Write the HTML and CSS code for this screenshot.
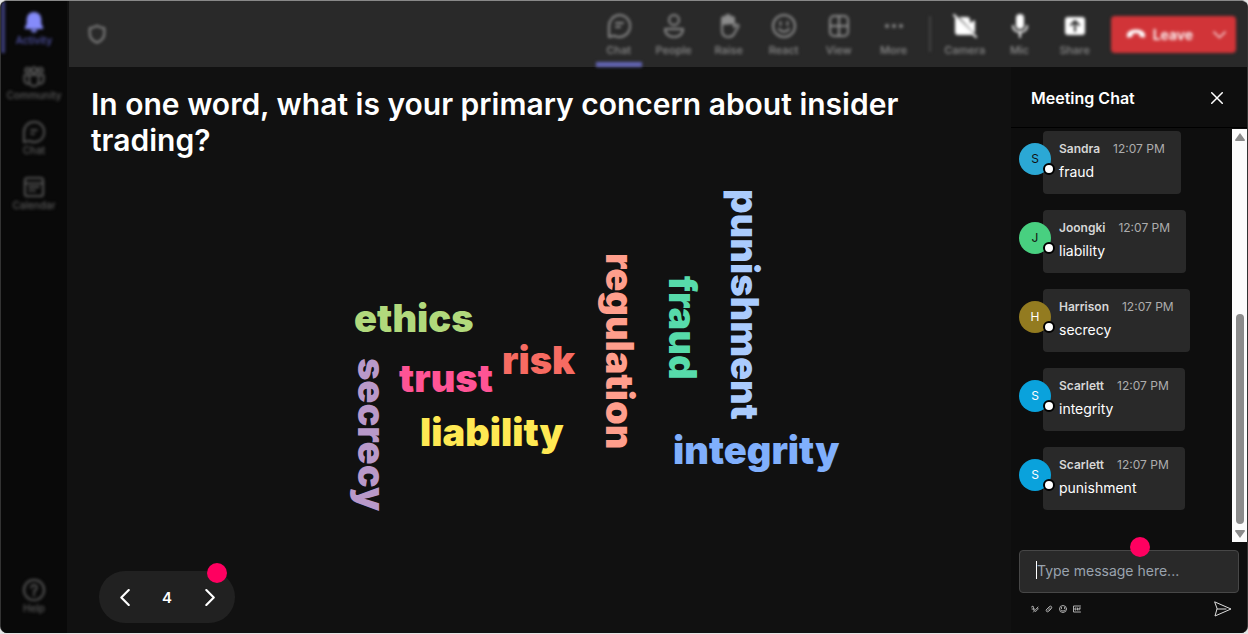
FILE: index.html
```
<!DOCTYPE html>
<html lang="en">
<head>
    <meta charset="UTF-8">
    <meta name="viewport" content="width=device-width, initial-scale=1.0">
    <title>Meeting</title>
    <link rel="stylesheet" href="styles.css">
</head>
<body>
    <div class="app">
        <nav class="sidebar">
            <a href="#" class="nav-item active">
                <svg class="icon" viewBox="0 0 24 24"><path class="solid" d="M12 1a8 8 0 0 0-8 8v5l-2 4c-.3.8 0 1.500 1 1.500h18c1 0 1.300-.7 1-1.500l-2-4V9a8 8 0 0 0-8-8zM8.500 20.500a3.500 3 0 0 0 7 0z"/></svg>
                <span>Activity</span>
            </a>
            <a href="#" class="nav-item">
                <svg class="icon" viewBox="0 0 24 24"><circle cx="5" cy="4.500" r="2.500"/><circle cx="12" cy="4.500" r="3"/><circle cx="19" cy="4.500" r="2.500"/><path d="M7 10h10v7a5 5 0 0 1-10 0zM7 10H1.500v5a4 4 0 0 0 5.500 4M17 10h5.500v5a4 4 0 0 1-5.500 4"/></svg>
                <span>Community</span>
            </a>
            <a href="#" class="nav-item">
                <svg class="icon" viewBox="0 0 24 24"><path d="M12 1a11 11 0 1 1-5 20.700L1 23V12A11 11 0 0 1 12 1zM9 10h6M9 14h3"/></svg>
                <span>Chat</span>
            </a>
            <a href="#" class="nav-item">
                <svg class="icon" viewBox="0 0 24 24"><rect x="2" y="2" width="20" height="20" rx="3"/><path d="M3 8h18M7 12h2M11 12h2M15 12h2M7 16h2M11 16h2"/></svg>
                <span>Calendar</span>
            </a>
            <a href="#" class="nav-item help">
                <svg class="icon" viewBox="0 0 24 24"><circle cx="12" cy="12" r="11"/><path d="M9 9.500a3 3 0 1 1 4.500 2.600c-1 .6-1.500 1-1.500 2.400M12 16.500v1.500"/></svg>
                <span>Help</span>
            </a>
        </nav>

        <div class="workspace">
            <header class="topbar">
                <div class="topbar-inner">
                    <svg class="shield" viewBox="0 0 24 24"><path d="M12 3c3 2 5 2.500 8 2.500v6c0 5-3 8-8 10-5-2-8-5-8-10v-6c3 0 5-.5 8-2.500z"/></svg>
                    <div class="tools">
                        <button class="tool selected">
                            <svg class="icon" viewBox="0 0 24 24"><path d="M12 1a11 11 0 1 1-5 20.700L2 23V12A11 11 0 0 1 12 1zM9 9h7M9 13h4"/></svg>
                            <span>Chat</span>
                        </button>
                        <button class="tool">
                            <svg class="icon" viewBox="0 0 24 24"><circle cx="12" cy="6" r="5"/><path d="M3 15h18c0 5-4 8-9 8s-9-3-9-8z"/></svg>
                            <span>People</span>
                        </button>
                        <button class="tool">
                            <svg class="icon" viewBox="0 0 24 24"><path class="solid" d="M5 11V5a2 2 0 0 1 4 0V3a2 2 0 0 1 4 0v2a2 2 0 0 1 4 0v5z"/><path d="M5 11V5a2 2 0 0 1 4 0V3a2 2 0 0 1 4 0v2a2 2 0 0 1 4 0v8l2-2c1.500-1 3 0 2.500 1.500L17 20c-1 2-3 3-5.500 3C7 23 5 20 5 16v-5"/></svg>
                            <span>Raise</span>
                        </button>
                        <button class="tool">
                            <svg class="icon" viewBox="0 0 24 24"><circle cx="12" cy="12" r="11"/><path d="M8.500 8v3M15.500 8v3M7 15c3 3.500 7 3.500 10 0"/></svg>
                            <span>React</span>
                        </button>
                        <button class="tool">
                            <svg class="icon" viewBox="0 0 24 24"><rect x="3" y="2" width="18" height="20" rx="4"/><path d="M12 2v20M3 12h18"/></svg>
                            <span>View</span>
                        </button>
                        <button class="tool">
                            <svg class="icon" viewBox="0 0 24 24"><circle class="solid" cx="5" cy="12" r="2"/><circle class="solid" cx="12" cy="12" r="2"/><circle class="solid" cx="19" cy="12" r="2"/></svg>
                            <span>More</span>
                        </button>
                    </div>
                    <div class="tools devices">
                        <button class="tool">
                            <svg class="icon" viewBox="0 0 24 24"><path class="solid" d="M2 3l18 18H5a3 3 0 0 1-3-3zM6 3h8a3 3 0 0 1 3 3v3l5-3v13l-3-2z"/><path d="M1 1l22 22"/></svg>
                            <span>Camera</span>
                        </button>
                        <button class="tool">
                            <svg class="icon" viewBox="0 0 24 24"><rect class="solid" x="8" y="0" width="8" height="15" rx="4"/><path d="M5 12c0 8 14 8 14 0M12 18v5"/></svg>
                            <span>Mic</span>
                        </button>
                        <button class="tool">
                            <svg class="icon" viewBox="0 0 24 24"><rect class="solid" x="2" y="3" width="20" height="18" rx="3"/><path class="cut" d="M12 17V7M8 11l4-4 4 4"/></svg>
                            <span>Share</span>
                        </button>
                    </div>
                    <button class="leave">
                        <svg class="phone" viewBox="0 0 24 24"><path class="solid" d="M12 7c5 0 10 2 10 6.500 0 2-.7 2.500-2 2.300l-3-.6c-1-.2-1.400-.8-1.400-1.800v-1.600c-2-.8-5-.8-7.200 0v1.600c0 1-.4 1.600-1.400 1.800l-3 .6c-1.300.2-2-.3-2-2.300C2 9 7 7 12 7z"/></svg>
                        <span>Leave</span>
                        <svg class="caret" viewBox="0 0 24 24"><path d="M3 8l9 9 9-9"/></svg>
                    </button>
                </div>
            </header>

            <div class="content">
                <main class="stage">
                    <h1>In one word, what is your primary concern about insider trading?</h1>
                    <div class="cloud">
                        <span class="word ethics">ethics</span>
                        <span class="word risk">risk</span>
                        <span class="word trust">trust</span>
                        <span class="word liability">liability</span>
                        <span class="word integrity">integrity</span>
                        <span class="word vertical secrecy">secrecy</span>
                        <span class="word vertical regulation">regulation</span>
                        <span class="word vertical fraud">fraud</span>
                        <span class="word vertical punishment">punishment</span>
                    </div>
                    <div class="pager">
                        <button aria-label="Previous"><svg viewBox="0 0 16 16"><path d="M12 1L5 8l7 7"/></svg></button>
                        <span>4</span>
                        <button aria-label="Next"><svg viewBox="0 0 16 16"><path d="M5 1l7 7-7 7"/></svg></button>
                        <i class="hotspot"></i>
                    </div>
                </main>

                <aside class="chat">
                    <div class="chat-header">
                        <h2>Meeting Chat</h2>
                        <button aria-label="Close"><svg viewBox="0 0 16 16"><path d="M1 1l14 14M15 1L1 15"/></svg></button>
                    </div>
                    <div class="chat-body">
                        <div class="messages">
                            <div class="message">
                                <div class="avatar sandra">S</div>
                                <div class="bubble">
                                    <div class="meta"><b>Sandra</b><time>12:07 PM</time></div>
                                    <p>fraud</p>
                                </div>
                            </div>
                            <div class="message">
                                <div class="avatar joongki">J</div>
                                <div class="bubble">
                                    <div class="meta"><b>Joongki</b><time>12:07 PM</time></div>
                                    <p>liability</p>
                                </div>
                            </div>
                            <div class="message">
                                <div class="avatar harrison">H</div>
                                <div class="bubble">
                                    <div class="meta"><b>Harrison</b><time>12:07 PM</time></div>
                                    <p>secrecy</p>
                                </div>
                            </div>
                            <div class="message">
                                <div class="avatar scarlett">S</div>
                                <div class="bubble">
                                    <div class="meta"><b>Scarlett</b><time>12:07 PM</time></div>
                                    <p>integrity</p>
                                </div>
                            </div>
                            <div class="message">
                                <div class="avatar scarlett">S</div>
                                <div class="bubble">
                                    <div class="meta"><b>Scarlett</b><time>12:07 PM</time></div>
                                    <p>punishment</p>
                                </div>
                            </div>
                        </div>
                        <div class="scrollbar">
                            <svg viewBox="0 0 10 8"><path d="M5 0l5 7q0 1-1 1H1q-1 0-1-1z"/></svg>
                            <div class="track"><div class="thumb"></div></div>
                            <svg viewBox="0 0 10 8"><path d="M5 8l5-7q0-1-1-1H1q-1 0-1 1z"/></svg>
                        </div>
                    </div>
                    <form class="composer">
                        <div class="field">
                            <i class="cursor"></i>
                            <input type="text" aria-label="Message" placeholder="Type message here...">
                            <i class="hotspot"></i>
                        </div>
                        <div class="composer-bar">
                            <button type="button" aria-label="Format"><svg viewBox="0 0 16 16"><path d="M1 4l3-2 2 9M2 8h5M5 14l9-10M9 13c2-3 5-2 5-6"/></svg></button>
                            <button type="button" aria-label="Attach"><svg viewBox="0 0 16 16"><path d="M3 9l6-6c2-2 6 0 4 4l-6 6c-3 2-6-1-4-4l6-5M6 11l5-5"/></svg></button>
                            <button type="button" aria-label="Emoji"><svg viewBox="0 0 16 16"><circle cx="8" cy="8" r="7"/><path d="M5 5v2M11 5v2M4 10c2 3 6 3 8 0"/></svg></button>
                            <button type="button" aria-label="GIF"><svg viewBox="0 0 16 16"><path d="M15 2H1v12h14M6 6H4v4h2V8M9 6v4M15 6h-3v4M12 8h2"/></svg></button>
                            <button type="submit" class="send" aria-label="Send"><svg viewBox="0 0 18 16"><path d="M1 1l16 7L1 15l2-7zM3 8h9"/></svg></button>
                        </div>
                    </form>
                </aside>
            </div>
        </div>
    </div>
</body>
</html>
```
FILE: styles.css
```
* {
    box-sizing: border-box;
}
body {
    margin: 0;
    height: 100vh;
    background-color: #e4e4e4;
    font-family: Inter, "Liberation Sans", sans-serif;
    color: #fff;
}
h1, h2, p {
    margin: 0;
}
button {
    padding: 0;
    border: none;
    background: none;
    color: inherit;
    font-family: inherit;
    cursor: pointer;
}
svg {
    display: block;
    fill: none;
    stroke: currentColor;
    stroke-width: 2;
    stroke-linecap: round;
    stroke-linejoin: round;
}
.solid {
    fill: currentColor;
    stroke: none;
}
.cut {
    stroke: #292929;
}
.app {
    display: flex;
    height: calc(100vh - 1px);
    border: 1px solid #333;
    border-top-color: #888;
    border-bottom: none;
    border-radius: 7px;
    background-color: #111;
    overflow: hidden;
}

/* left navigation */
.sidebar {
    width: 66px;
    flex-shrink: 0;
    display: flex;
    flex-direction: column;
    background-color: #090909;
    padding-bottom: 17px;
}
.nav-item {
    display: flex;
    flex-direction: column;
    align-items: center;
    height: 55px;
    padding-top: 10px;
    color: #5c5c5c;
    font-size: 10px;
    font-weight: 500;
    line-height: 15px;
    text-decoration: none;
    filter: blur(1px) blur(1px);
}
.nav-item.active {
    height: 52px;
    margin-bottom: 3px;
    border-left: 4px solid #3c3d78;
    padding-right: 4px;
    color: #5356ac;
}
.nav-item.active svg {
    color: #858bfa;
}
.nav-item.help {
    height: auto;
    margin-top: auto;
}
.icon {
    width: 22px;
    height: 22px;
}

/* call controls */
.workspace {
    flex: 1;
    min-width: 0;
    display: flex;
    flex-direction: column;
}
.topbar {
    margin-left: 2px;
    height: 66px;
    flex-shrink: 0;
    background-color: #292929;
    color: #8c8c8c;
}
.topbar-inner {
    display: flex;
    align-items: center;
    height: 100%;
    padding: 0 11px 0 17px;
    filter: blur(1px) blur(1px);
}
.shield {
    width: 22px;
    height: 22px;
    margin-right: auto;
}
.tools {
    display: flex;
    gap: 9px;
    height: 100%;
}
.tool {
    display: flex;
    flex-direction: column;
    align-items: center;
    gap: 4px;
    width: 46px;
    padding-top: 13px;
    font-size: 11px;
    font-weight: 500;
    line-height: 16px;
    border-bottom: 5px solid transparent;
}
.tool .icon {
    width: 24px;
    height: 24px;
    flex-shrink: 0;
}
.tool.selected {
    border-bottom-color: #6365b5;
}
.devices {
    position: relative;
    margin-left: 25px;
}
.devices .icon {
    color: #fff;
}
.devices::before {
    content: "";
    position: absolute;
    left: -13px;
    top: 15px;
    width: 2px;
    height: 36px;
    background-color: #444;
}
.leave {
    display: flex;
    align-items: center;
    gap: 6px;
    height: 37px;
    margin-left: 13px;
    padding: 0 9px 0 14px;
    border-radius: 4px;
    background-color: #d13438;
    color: #fff;
    font-size: 14px;
    font-weight: 600;
}
.leave .phone {
    width: 22px;
    height: 22px;
}
.leave .caret {
    width: 15px;
    height: 15px;
    margin-left: 13px;
}

/* poll question */
.content {
    flex: 1;
    min-height: 0;
    display: flex;
}
.stage {
    flex: 1;
    min-width: 0;
    display: flex;
    flex-direction: column;
    align-items: flex-start;
    padding: 19px 24px 10px;
}
.stage h1 {
    font-size: 30px;
    font-weight: 600;
    line-height: 36px;
}
.cloud {
    position: relative;
    align-self: center;
    flex: 1;
    width: 500px;
}
.word {
    position: absolute;
    font-family: Inter, "Liberation Sans", sans-serif;
    font-size: 38px;
    font-weight: 900;
    line-height: 40px;
    white-space: nowrap;
}
.vertical {
    writing-mode: vertical-rl;
}
.ethics { left: 65px; top: 140px; color: #b1d97c; }
.risk { left: 213px; top: 182px; color: #f76b62; }
.trust { left: 110px; top: 200px; color: #ff5495; }
.liability { left: 131px; top: 254px; color: #ffe953; }
.integrity { left: 384px; top: 272px; color: #80affc; }
.secrecy { left: 63px; top: 200px; color: #b999c9; }
.regulation { left: 311px; top: 95px; color: #ff9e8c; }
.fraud { left: 374px; top: 118px; color: #57dbaa; }
.punishment { left: 436px; top: 31px; color: #aacbfd; }
.pager {
    position: relative;
    display: flex;
    align-items: center;
    justify-content: space-between;
    width: 136px;
    height: 52px;
    margin-left: 8px;
    padding: 0 17px;
    border-radius: 26px;
    background-color: #212121;
    font-size: 15px;
    font-weight: 600;
}
.pager svg {
    width: 17px;
    height: 17px;
}
.hotspot {
    position: absolute;
    width: 20px;
    height: 20px;
    border-radius: 50%;
    background-color: #ff0060;
}
.pager .hotspot {
    right: 8px;
    top: -8px;
}

/* meeting chat */
.chat {
    width: 236px;
    flex-shrink: 0;
    display: flex;
    flex-direction: column;
    background-color: #0e0e0e;
}
.chat-header {
    display: flex;
    align-items: center;
    justify-content: space-between;
    height: 61px;
    padding: 2px 24px 0 20px;
    border-bottom: 1px solid #000;
}
.chat-header h2 {
    font-size: 16px;
    font-weight: 600;
}
.chat-header svg {
    width: 12px;
    height: 12px;
}
.chat-body {
    flex: 1;
    min-height: 0;
    display: flex;
    margin-top: 1px;
}
.messages {
    flex: 1;
    display: flex;
    flex-direction: column;
    gap: 16px;
    padding: 2px 8px;
    overflow: hidden;
}
.message {
    display: flex;
    align-items: flex-start;
}
.avatar {
    position: relative;
    width: 32px;
    height: 32px;
    margin: 12px -8px 0 0;
    border-radius: 50%;
    font-size: 12px;
    line-height: 32px;
    text-align: center;
}
.avatar::after {
    content: "";
    position: absolute;
    right: -4px;
    bottom: 0;
    width: 8px;
    height: 8px;
    border: 2px solid #000;
    border-radius: 50%;
    background-color: #fff;
}
.sandra { background-color: #2ba8d5; color: #111; }
.joongki { background-color: #48d080; color: #111; }
.harrison { background-color: #937b20; }
.scarlett { background-color: #0aa2dc; }
.bubble {
    height: 63px;
    padding: 8px 16px;
    border-radius: 4px;
    background-color: #292929;
}
.meta {
    display: flex;
    gap: 13px;
    font-size: 12px;
    line-height: 20px;
    color: #adadad;
}
.meta b {
    font-weight: 600;
    color: #d6d6d6;
}
.bubble p {
    font-size: 14px;
    line-height: 25px;
}
.scrollbar {
    display: flex;
    flex-direction: column;
    align-items: center;
    width: 15px;
    padding: 4px 0;
    background-color: #fcfcfc;
}
.scrollbar svg {
    width: 10px;
    height: 8px;
    fill: #8b8b8b;
    stroke: none;
}
.track {
    flex: 1;
    display: flex;
    align-items: flex-end;
    padding-bottom: 6px;
}
.thumb {
    width: 8px;
    height: 210px;
    border-radius: 4px;
    background-color: #8b8b8b;
}
.composer {
    padding: 8px;
}
.field {
    position: relative;
    display: flex;
    align-items: center;
    height: 43px;
    padding: 0 16px 3px;
    border: 1px solid #474747;
    border-radius: 4px;
    background-color: #292929;
}
.field input {
    width: 100%;
    padding: 0;
    border: none;
    outline: none;
    background: none;
    color: #fff;
    font-family: inherit;
    font-size: 14px;
}
.field input::placeholder {
    color: #9aa3ae;
}
.field .hotspot {
    left: 110px;
    top: -14px;
}
.cursor {
    width: 1px;
    height: 18px;
    flex-shrink: 0;
    background-color: #fff;
}
.composer-bar {
    display: flex;
    align-items: center;
    gap: 6px;
    height: 32px;
    padding: 0 7px 0 12px;
    color: #adadad;
}
.composer-bar svg {
    width: 8px;
    height: 8px;
}
.composer-bar .send {
    margin-left: auto;
    color: #ddd;
}
.composer-bar .send svg {
    width: 18px;
    height: 16px;
    stroke-width: 1;
}
```
